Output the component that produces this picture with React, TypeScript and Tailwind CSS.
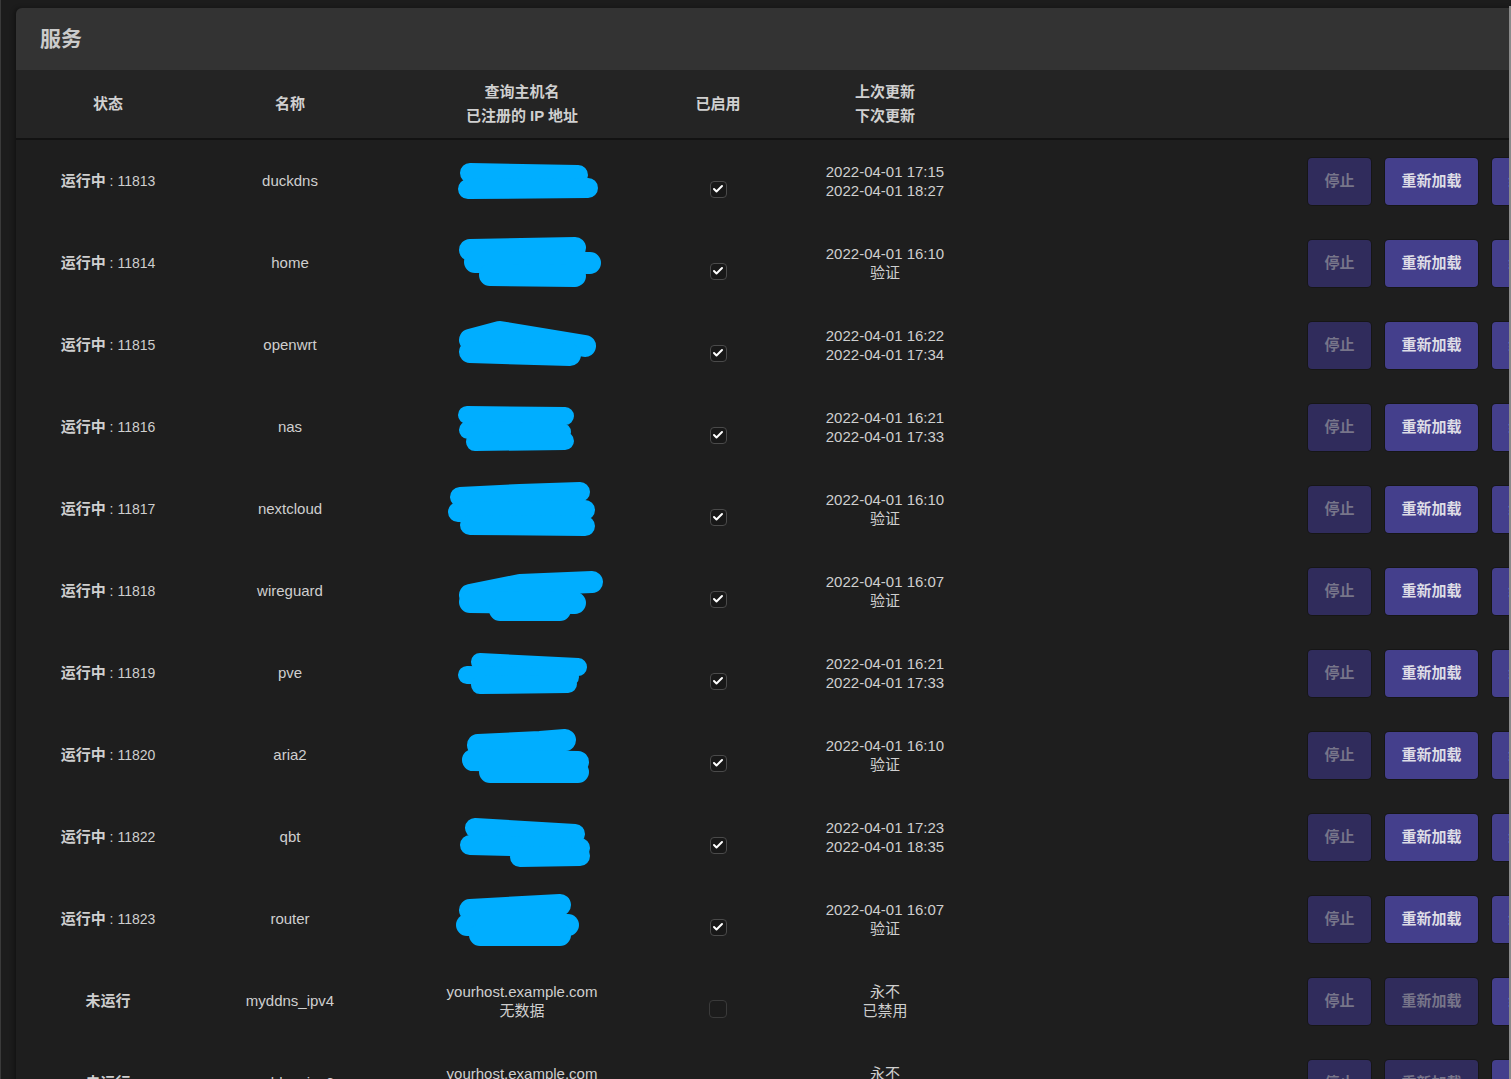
import { Check } from "lucide-react";

type Row = {
  status: string;
  port?: string;
  name: string;
  host?: [string, string];
  enabled: boolean;
  times: [string, string];
  blob?: number[][];
};

const blobs: number[][][] = [
  [[33, 22, 141, 24], [31, 38, 151, 37]],
  [[33, 17, 138, 15], [38, 29, 153, 30], [53, 42, 138, 43]],
  [[33, 25, 63, 17, 148, 31], [33, 37, 133, 40]],
  [[30, 18, 128, 19], [31, 33, 125, 35], [38, 45, 128, 44]],
  [[23, 18, 83, 15, 143, 13], [21, 33, 148, 31], [33, 46, 148, 47]],
  [[33, 34, 83, 24, 155, 21], [33, 41, 138, 42], [63, 49, 123, 49]],
  [[43, 19, 141, 24], [30, 32, 133, 34], [43, 42, 131, 41]],
  [[41, 20, 103, 17, 128, 15], [36, 35, 141, 37], [53, 47, 141, 47]],
  [[38, 21, 138, 27], [33, 38, 143, 41], [83, 50, 143, 49]],
  [[33, 21, 123, 16], [30, 36, 131, 36], [43, 46, 123, 46]],
];

const widths = [20, 22, 22, 18, 20, 22, 18, 22, 20, 22];

const running: [string, string, string, string][] = [
  ["11813", "duckdns", "2022-04-01 17:15", "2022-04-01 18:27"],
  ["11814", "home", "2022-04-01 16:10", "验证"],
  ["11815", "openwrt", "2022-04-01 16:22", "2022-04-01 17:34"],
  ["11816", "nas", "2022-04-01 16:21", "2022-04-01 17:33"],
  ["11817", "nextcloud", "2022-04-01 16:10", "验证"],
  ["11818", "wireguard", "2022-04-01 16:07", "验证"],
  ["11819", "pve", "2022-04-01 16:21", "2022-04-01 17:33"],
  ["11820", "aria2", "2022-04-01 16:10", "验证"],
  ["11822", "qbt", "2022-04-01 17:23", "2022-04-01 18:35"],
  ["11823", "router", "2022-04-01 16:07", "验证"],
];

function Blob({ idx }: { idx: number }) {
  return (
    <svg width="170" height="60" viewBox="0 0 170 60" className="block">
      {blobs[idx].map((pts, i) => (
        <polyline
          key={i}
          points={pts.join(" ")}
          fill="none"
          stroke="#00aeff"
          strokeWidth={widths[idx]}
          strokeLinecap="round"
          strokeLinejoin="round"
        />
      ))}
    </svg>
  );
}

function Btn({ label, on, w }: { label: string; on: boolean; w: string }) {
  return (
    <div
      className={`flex h-[47px] ${w} shrink-0 items-center justify-center rounded-[4px] text-[15px] font-semibold shadow-[0_0_0_1px_rgba(0,0,0,0.25)] ${
        on ? "bg-[#443f8c] text-[#dedde6]" : "bg-[#302c5c] text-[#77758a]"
      }`}
    >
      {label}
    </div>
  );
}

export default function App() {
  const rows: Row[] = running.map(([port, name, a, b], i) => ({
    status: "运行中",
    port,
    name,
    enabled: true,
    times: [a, b],
    blob: [i],
  }));
  rows.push({ status: "未运行", name: "myddns_ipv4", host: ["yourhost.example.com", "无数据"], enabled: false, times: ["永不", "已禁用"] });
  rows.push({ status: "未运行", name: "myddns_ipv6", host: ["yourhost.example.com", "无数据"], enabled: false, times: ["永不", "已禁用"] });

  const cols = "grid grid-cols-[184px_180px_284px_108px_226px_1fr]";

  return (
    <div
      className="relative h-[1079px] w-[1511px] overflow-hidden bg-[#1c1c1c] text-[#cfcfcf]"
      style={{ fontFamily: '"Liberation Sans", "Noto Sans CJK SC", sans-serif' }}
    >
      <div className="absolute inset-y-0 left-0 w-px bg-[#3a3a3a]" />
      <div className="absolute right-0 top-[6px] bottom-0 w-[2px] bg-[#8a8a8a]" />

      <div className="ml-4 mt-2 w-[1620px] overflow-hidden rounded-tl-[6px] bg-[#1e1e1e] shadow-[-2px_0_4px_rgba(0,0,0,0.35)]">
        <div className="flex h-[62px] items-center bg-[#333333] pl-6 text-[21px] font-bold text-[#cbcbcb]">
          服务
        </div>

        <div className={`${cols} h-[70px] items-center border-b-2 border-[#121212] bg-[#242424] text-[15px] font-bold leading-6 text-[#d0d0d0]`}>
          <div className="text-center">状态</div>
          <div className="text-center">名称</div>
          <div className="text-center">
            查询主机名
            <br />
            已注册的 IP 地址
          </div>
          <div className="text-center">已启用</div>
          <div className="text-center">
            上次更新
            <br />
            下次更新
          </div>
          <div />
        </div>

        {rows.map((r, i) => (
          <div key={i} className={`${cols} h-[82px] items-center text-[15px]`}>
            <div className="text-center">
              <span className="font-semibold">{r.status}</span>
              {r.port && <span className="text-[14px]"> : {r.port}</span>}
            </div>
            <div className="text-center">{r.name}</div>
            <div className="flex justify-center text-center leading-[19px]">
              {r.blob ? (
                <Blob idx={r.blob[0]} />
              ) : (
                <div>
                  {r.host![0]}
                  <br />
                  {r.host![1]}
                </div>
              )}
            </div>
            <div className="flex justify-center pt-[16px]">
              {r.enabled ? (
                <div className="flex h-[17px] w-[17px] items-center justify-center rounded-[4px] border border-[#4a4a4a] bg-[#181818]">
                  <Check className="h-3 w-3 text-white" strokeWidth={4} />
                </div>
              ) : (
                <div className="h-[18px] w-[18px] rounded-[4px] border border-[#3a3a3a] bg-[#1c1c1c]" />
              )}
            </div>
            <div className="text-center leading-[19px]">
              {r.times[0]}
              <br />
              {r.times[1]}
            </div>
            <div className="flex gap-[14px] pl-[310px]">
              <Btn label="停止" on={false} w="w-[63px]" />
              <Btn label="重新加载" on={r.enabled} w="w-[93px]" />
              <Btn label="编辑" on={true} w="w-[63px]" />
            </div>
          </div>
        ))}
      </div>
    </div>
  );
}
